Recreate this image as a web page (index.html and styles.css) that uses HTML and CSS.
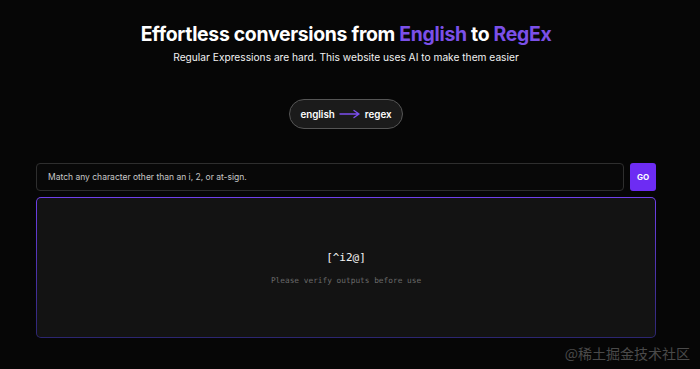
FILE: index.html
```html
<!DOCTYPE html>
<html>
<head>
<meta charset="utf-8">
<link rel="stylesheet" href="styles.css">
</head>
<body>
<div class="page">
  <header class="hero">
    <h1 class="title">Effortless conversions from <span class="accent">English</span> to <span class="accent">RegEx</span></h1>
    <p class="subtitle">Regular Expressions are hard. This website uses AI to make them easier</p>
  </header>
  <div class="mode-row">
    <div class="pill">
      <span>english</span>
      <svg class="arrow" width="22" height="10" viewBox="0 0 22 10"><path d="M1 5H20M15 1.5L20 5L15 8.5" fill="none" stroke="#7c4ff0" stroke-width="1.4" stroke-linecap="round" stroke-linejoin="round"/></svg>
      <span>regex</span>
    </div>
  </div>
  <div class="query-row">
    <div class="input">Match any character other than an i, 2, or at-sign.</div>
    <button class="go">GO</button>
  </div>
  <div class="output">
    <div class="output-inner">
      <div class="result">[^i2@]</div>
      <div class="note">Please verify outputs before use</div>
    </div>
  </div>
  <div class="watermark">@稀土掘金技术社区</div>
</div>
</body>
</html>
```
FILE: styles.css
```css
html, body {
  margin: 0;
  padding: 0;
  background: #060606;
}
body {
  font-family: Inter, "Noto Sans", sans-serif;
  color: #fff;
  width: 700px;
  height: 369px;
  overflow: hidden;
}
.page {
  position: relative;
  height: 369px;
  padding: 21px 44px 0 36px;
  box-sizing: border-box;
}
.hero {
  text-align: center;
}
.title {
  margin: 0;
  font-size: 19.4px;
  font-weight: 700;
  letter-spacing: -0.3px;
  line-height: 26px;
}
.accent {
  color: #7b50e8;
}
.subtitle {
  margin: 4px 0 0;
  font-size: 10.2px;
  line-height: 13px;
  color: #f2f2f2;
}
.mode-row {
  display: flex;
  justify-content: center;
  margin-top: 35px;
}
.pill {
  display: flex;
  align-items: center;
  gap: 4px;
  height: 28px;
  padding: 0 10px;
  border: 1px solid #555;
  border-radius: 15px;
  background: #1b1b1b;
  font-size: 9.8px;
  font-weight: 600;
}
.query-row {
  display: flex;
  gap: 6px;
  margin-top: 34px;
}
.input {
  flex: 1;
  height: 26px;
  display: flex;
  align-items: center;
  padding: 0 11px;
  border: 1px solid #2e2e2e;
  border-radius: 4px;
  background: #080808;
  font-size: 8.5px;
  color: #c8c8c8;
}
.go {
  width: 26px;
  height: 28px;
  border: none;
  border-radius: 3px;
  background: #6d2cf3;
  color: #fff;
  font-family: Inter, sans-serif;
  font-size: 8px;
  font-weight: 700;
  padding: 0;
}
.output {
  margin-top: 6px;
  height: 141px;
  padding: 1px;
  border-radius: 5px;
  background: linear-gradient(#7040ec, #2c2670);
  box-sizing: border-box;
}
.output-inner {
  height: 100%;
  border-radius: 4px;
  background: #131313;
  display: flex;
  flex-direction: column;
  align-items: center;
  padding-top: 53px;
  box-sizing: border-box;
}
.result {
  font-family: "DejaVu Sans Mono", monospace;
  font-size: 11px;
  color: #f4f4f4;
}
.note {
  margin-top: 12px;
  font-family: "DejaVu Sans Mono", monospace;
  font-size: 7.8px;
  color: #6a6a6a;
}
.watermark {
  position: absolute;
  right: 10px;
  bottom: 6px;
  font-family: "Noto Sans CJK SC", sans-serif;
  font-size: 14px;
  color: #4a4a4a;
}
```
